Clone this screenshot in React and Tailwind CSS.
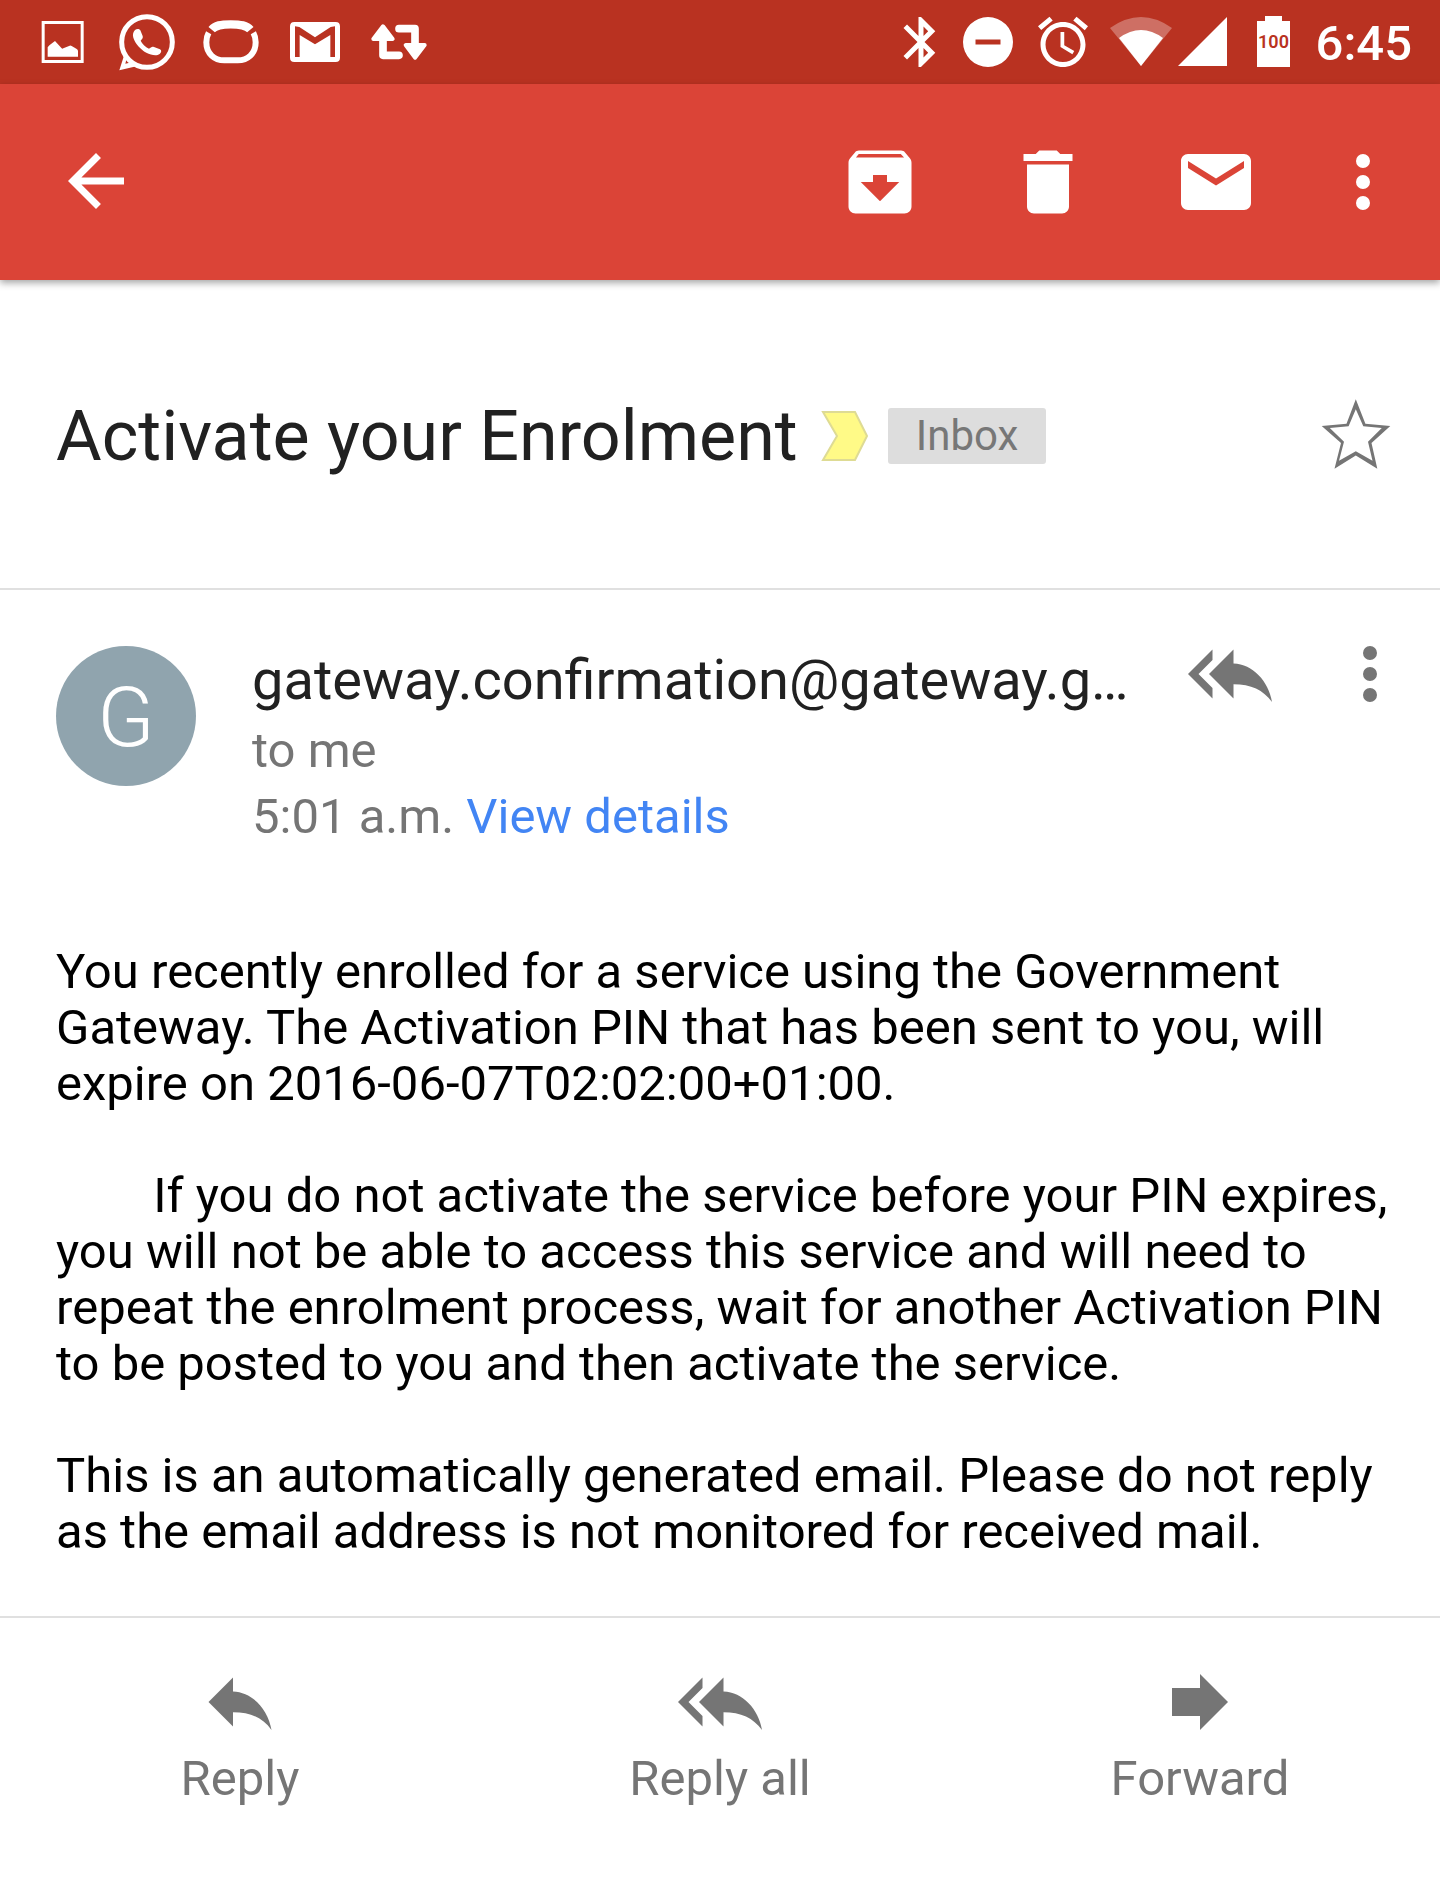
const body = [
  `You recently enrolled for a service using the Government
Gateway. The Activation PIN that has been sent to you, will
expire on 2016-06-07T02:02:00+01:00.`,
  `        If you do not activate the service before your PIN expires,
you will not be able to access this service and will need to
repeat the enrolment process, wait for another Activation PIN
to be posted to you and then activate the service.`,
  `This is an automatically generated email. Please do not reply
as the email address is not monitored for received mail.`,
];

const paths = {
  back: "M20 10.7H7.83l5.59-5.59L12 3.7l-8 8 8 8 1.41-1.41L7.83 12.7H20v-2z",
  archive:
    "M20.54 5.23l-1.39-1.68C18.88 3.21 18.47 3 18 3H6c-.47 0-.88.21-1.16.55L3.46 5.23C3.17 5.57 3 6.02 3 6.5V19c0 1.1.9 2 2 2h14c1.1 0 2-.9 2-2V6.5c0-.48-.17-.93-.46-1.27zM12 17.5L6.5 12H10v-2h4v2h3.5L12 17.5zM5.12 5l.81-1h12l.94 1H5.12z",
  trash: "M6 19c0 1.1.9 2 2 2h8c1.1 0 2-.9 2-2V7H6v12zM19 4h-3.5l-1-1h-5l-1 1H5v2h14V4z",
  mail: "M20 4H4c-1.1 0-2 .9-2 2v12c0 1.1.9 2 2 2h16c1.1 0 2-.9 2-2V6c0-1.1-.9-2-2-2zM20 8l-8 5-8-5V6l8 5 8-5z",
  more: "M12 8a2 2 0 1 0 0-4 2 2 0 0 0 0 4zm0 2a2 2 0 1 0 0 4 2 2 0 0 0 0-4zm0 6a2 2 0 1 0 0 4 2 2 0 0 0 0-4z",
  reply: "M10 9V5l-7 7 7 7v-4.1c5 0 8.5 1.6 11 5.1C20 14 15.5 9.2 10 9z",
  replyAll:
    "M7 8V5l-7 7 7 7v-3l-4-4 4-4zm6 1V5l-7 7 7 7v-4.1c5 0 8.5 1.6 11 5.1C23 14 18.5 9.2 13 9z",
  forward: "M12 8V4l8 8-8 8v-4H4V8z",
  bluetooth:
    "M17.71 7.71L12 2h-1v7.59L6.41 5 5 6.41 10.59 12 5 17.59 6.41 19 11 14.41V22h1l5.71-5.71-4.3-4.29 4.3-4.29zM13 5.83l1.88 1.88L13 9.59V5.83zm1.88 10.46L13 18.17v-3.76l1.88 1.88z",
  dnd: "M12 2a10 10 0 1 0 0 20 10 10 0 0 0 0-20zm5 11H7v-2h10z",
  alarm:
    "M22 5.72l-4.6-3.86-1.29 1.53 4.6 3.86L22 5.72zM7.88 3.39L6.6 1.86 2 5.71l1.29 1.53 4.59-3.85zM12.5 8H11v6l4.75 2.85.75-1.23-4-2.37V8zM12 4c-4.97 0-9 4.03-9 9s4.02 9 9 9c4.97 0 9-4.03 9-9s-4.03-9-9-9zm0 16c-3.87 0-7-3.13-7-7s3.13-7 7-7 7 3.13 7 7-3.13 7-7 7z",
};

function Icon({ name, className = "size-21" }) {
  return (
    <svg viewBox="0 0 24 24" fill="currentColor" fillRule="evenodd" className={className} aria-hidden="true">
      <path d={paths[name]} />
    </svg>
  );
}

function NotificationIcons() {
  return (
    <div className="flex items-center">
      <svg viewBox="3 0 252 252" className="size-21" fill="#fff" aria-label="Screenshot">
        <path fillRule="evenodd" d="M65 63h126v126H65zM74 72v108h108V72z" />
        <path d="M83 170v-28q4-6 10-10l12-9 20 22q2 2 5 0l19-8q3-1 6 1l14 8q5 3 5 7v17z" />
      </svg>
      <svg viewBox="255 0 252 252" className="size-21" aria-label="WhatsApp">
        <circle cx="381" cy="126" r="76" fill="none" stroke="#fff" strokeWidth="15" />
        <path d="M308 158l14 9-6 24 26-6 12 11-11 4-45 11 13-41z" fill="#fff" />
        <path
          d="M345 90c5-4 12-5 16 1l7 17c2 6-2 9-6 14 4 8 14 19 25 24 6-4 9-8 15-5l18 7c6 4 4 10-1 14-10 7-26 3-40-4-18-10-33-27-39-45-3-9 0-18 5-23z"
          fill="#fff"
        />
      </svg>
      <svg viewBox="507 0 252 252" className="size-21" fill="none" stroke="#fff" aria-label="Remote">
        <path d="M575 89C586 76 602 73 632 73s48 3 59 16" strokeWidth="25" />
        <path
          d="M566 98q-7 12-7 29c0 34 24 54 54 54h40c30 0 54-20 54-54q0-17-7-29"
          strokeWidth="18"
        />
      </svg>
      <svg viewBox="759 0 252 252" className="size-21" fill="#fff" aria-label="Gmail">
        <path
          fillRule="evenodd"
          d="M823 66h124q13 0 13 13v94q0 13-13 13H823q-13 0-13-13V79q0-13 13-13zM825 79v92h14v-66l46 28 46-28v66h14V79l-13 2-47 31-47-31z"
        />
      </svg>
      <svg viewBox="1011 0 252 252" className="size-21" fill="#fff" stroke="#fff" strokeLinejoin="round" strokeLinecap="round" aria-label="Repost">
        <path d="M1089 79l29 38h-58z" strokeWidth="12" />
        <path d="M1089 112v54h48" fill="none" strokeWidth="23" />
        <path d="M1185 173l-28-38h57z" strokeWidth="12" />
        <path d="M1137 86h48v50" fill="none" strokeWidth="23" />
      </svg>
    </div>
  );
}

function StatusBar() {
  return (
    <div className="flex h-21 items-center justify-between bg-[#b93221] pr-7 pl-[21px] text-white">
      <NotificationIcons />
      <div className="flex h-21 items-center">
        <Icon name="bluetooth" className="size-15" />
        <Icon name="dnd" className="ml-[7px] size-15" />
        <Icon name="alarm" className="ml-[15px] size-15" />
        <svg viewBox="1110 0 62 84" className="ml-[17px] h-21 w-[62px]" fill="#fff" aria-label="Wi-Fi">
          <path d="M1110 28Q1141 6 1172 28L1141 66z" fillOpacity=".3" />
          <path d="M1119 38Q1141 22 1163 38L1141 66z" />
        </svg>
        <svg viewBox="1178 0 50 84" className="ml-1.5 h-21 w-[50px]" fill="#fff" aria-label="Signal">
          <path d="M1178 66L1227 17v49z" />
        </svg>
        <svg viewBox="1257 0 33 84" className="ml-[29px] h-21 w-[33px]" fill="#fff" aria-label="Battery">
          <path d="M1257 21h8v-5h17v5h8v46h-33z" />
          <text x="1273.5" y="48" textAnchor="middle" fill="#b93221" fontFamily="Roboto" fontWeight="600" fontSize="18">
            100
          </text>
        </svg>
        <span className="ml-[26px] pt-1 text-[49px] leading-[80px] font-medium">6:45</span>
      </div>
    </div>
  );
}

function Toolbar() {
  return (
    <header className="relative flex h-49 items-center justify-between bg-[#db4437] pr-3.5 pl-[54px] text-white shadow-[0_3px_7px_rgba(0,0,0,0.35)]">
      <button aria-label="Back">
        <Icon name="back" />
      </button>
      <div className="flex">
        <button aria-label="Archive" className="flex w-42 justify-center">
          <Icon name="archive" />
        </button>
        <button aria-label="Delete" className="flex w-42 justify-center">
          <Icon name="trash" />
        </button>
        <button aria-label="Mark as unread" className="flex w-42 justify-center">
          <Icon name="mail" />
        </button>
        <button aria-label="More options" className="flex w-[126px] justify-center">
          <Icon name="more" />
        </button>
      </div>
    </header>
  );
}

function Subject() {
  return (
    <section className="flex h-[310px] items-center border-b-2 border-[#e0e0e0] pt-1 pr-[42px] pl-14">
      <h1 className="text-[70px] leading-[84px] text-[#212121]">Activate your Enrolment</h1>
      <svg viewBox="0 0 48 52" className="ml-[23px] h-[52px] w-12" aria-label="Important">
        <path d="M2 2h32l12 24-12 24H2l14-24z" fill="#fffa87" stroke="#dedb94" strokeWidth="2" />
      </svg>
      <span className="ml-[19px] rounded-[3px] bg-[#ddd] px-7 text-[42px] leading-14 text-[#777]">Inbox</span>
      <button aria-label="Star" className="ml-auto">
        <svg viewBox="534 14 84 84" className="size-21" fill="#757575" fillRule="evenodd" aria-hidden="true">
          <path d="M575.8 19.3L585.4 43.7 610.3 46 591.5 63 597.3 88.7 575.8 75.5 554.5 88.7 561 63 541.7 46 566.5 43.7zM575.8 29.3L583.3 46.3 601.8 48 588 61.7 592.5 80.7 575.8 71.3 559 80.7 564 61.7 549.8 48 568.6 46.3z" />
        </svg>
      </button>
    </section>
  );
}

function Sender() {
  return (
    <section className="flex items-start pt-14 pr-7 pl-14 text-[49px] text-[#757575]">
      <div className="flex size-35 shrink-0 items-center justify-center rounded-full bg-[#90a4ae] pt-1 text-[84px] font-light text-white">
        G
      </div>
      <div className="ml-14 min-w-0 flex-1">
        <h2 className="text-[56px] leading-[68px] whitespace-nowrap text-[#212121]">
          gateway.confirmation@gateway.g…
        </h2>
        <p className="mt-1 leading-[66px]">to me</p>
        <p className="leading-[66px]">
          5:01 a.m.{" "}
          <a href="#details" className="text-[#4285f4]">
            View details
          </a>
        </p>
      </div>
      <div className="-mt-3.5 ml-14 flex">
        <button aria-label="Reply all">
          <Icon name="replyAll" />
        </button>
        <button aria-label="More message options" className="ml-14">
          <Icon name="more" />
        </button>
      </div>
    </section>
  );
}

function FooterAction({ icon, label }) {
  return (
    <button className="flex flex-1 flex-col items-center">
      <Icon name={icon} />
      <span className="leading-[70px]">{label}</span>
    </button>
  );
}

export default function App() {
  return (
    <div className="min-h-screen bg-white font-[Roboto,sans-serif]">
      <StatusBar />
      <Toolbar />
      <main>
        <Subject />
        <Sender />
        <article className="space-y-14 pt-[94px] pr-10 pb-14 pl-14 text-[49px] leading-14 whitespace-pre-wrap text-black">
          {body.map((text) => (
            <p key={text}>{text}</p>
          ))}
        </article>
      </main>
      <footer className="flex border-t-2 border-[#e0e0e0] pt-[42px] text-[49px] text-[#757575]">
        <FooterAction icon="reply" label="Reply" />
        <FooterAction icon="replyAll" label="Reply all" />
        <FooterAction icon="forward" label="Forward" />
      </footer>
    </div>
  );
}
